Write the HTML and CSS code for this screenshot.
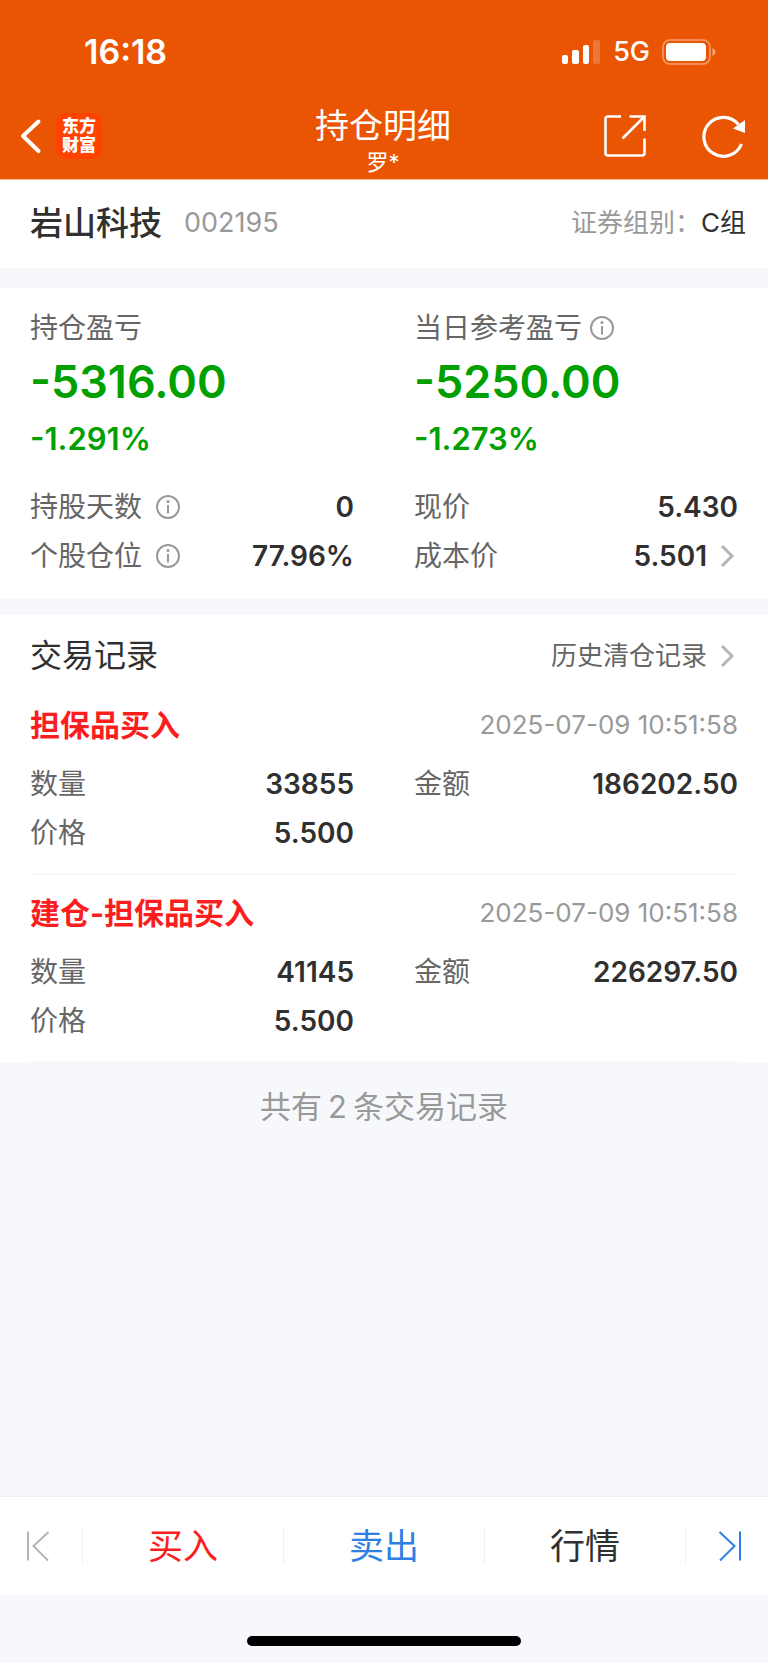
FILE: index.html
```html
<!DOCTYPE html>
<html lang="zh-CN">
<head>
    <meta charset="UTF-8">
    <meta name="viewport" content="width=device-width, initial-scale=1.0">
    <title>持仓明细</title>
    <link rel="stylesheet" href="styles.css">
</head>
<body>
    <header class="header">
        <div class="status-bar">
            <span class="time">16:18</span>
            <div class="status-icons">
                <svg width="40" height="26" viewBox="0 0 40 26" fill="#fff">
                    <rect x="1" y="16" width="6" height="9" rx="2"/>
                    <rect x="11" y="11" width="7" height="14" rx="2"/>
                    <rect x="22" y="6" width="6" height="19" rx="2"/>
                    <rect x="32" y="1" width="7" height="24" rx="2" opacity="0.2"/>
                </svg>
                <span class="network">5G</span>
                <svg width="54" height="26" viewBox="0 0 54 26">
                    <rect x="1" y="1" width="47" height="24" rx="7" fill="none" stroke="#fff" stroke-width="1.5" opacity="0.45"/>
                    <rect x="4" y="4" width="40" height="18" rx="4" fill="#fff"/>
                    <path d="M50.500 9 Q53.500 10.500 53.500 13 Q53.500 15.500 50.500 17 Z" fill="#fff" opacity="0.5"/>
                </svg>
            </div>
        </div>
        <div class="nav">
            <div class="nav-left">
                <button class="icon-btn" aria-label="返回">
                    <svg width="22" height="36" viewBox="0 0 22 36" fill="none" stroke="#fff" stroke-width="4" stroke-linecap="round" stroke-linejoin="round">
                        <path d="M18.500 3.500 L3 18 L18.500 33"/>
                    </svg>
                </button>
                <span class="app-logo">东方<br>财富</span>
            </div>
            <div class="nav-title">
                <h1>持仓明细</h1>
                <p>罗*</p>
            </div>
            <div class="nav-right">
                <button class="icon-btn" aria-label="分享">
                    <svg width="44" height="44" viewBox="0 0 44 44" fill="none" stroke="#fff" stroke-width="2.600">
                        <path d="M18 2.500 H5 Q2.500 2.500 2.500 5 V39 Q2.500 41.500 5 41.500 H39 Q41.500 41.500 41.500 39 V24.500"/>
                        <path d="M26.500 2.500 H41.500 V17"/>
                        <path d="M41 3 L19.500 24.500"/>
                    </svg>
                </button>
                <button class="icon-btn" aria-label="刷新">
                    <svg width="44" height="44" viewBox="0 0 44 44">
                        <path d="M36.500 10.500 A19.500 19.500 0 1 0 39.500 30" fill="none" stroke="#fff" stroke-width="3.200"/>
                        <path d="M43 6 V19 L31 14.500 Z" fill="#fff"/>
                    </svg>
                </button>
            </div>
        </div>
    </header>

    <main>
        <section class="stock">
            <h2>岩山科技</h2>
            <span class="stock-code">002195</span>
            <span class="stock-group">证券组别：<b>C组</b></span>
        </section>

        <section class="card position">
            <div class="columns">
                <div>
                    <div class="label">持仓盈亏</div>
                    <div class="profit">-5316.00</div>
                    <div class="percent">-1.291%</div>
                </div>
                <div>
                    <div class="label">当日参考盈亏
                        <svg class="info near" viewBox="0 0 24 24"><circle cx="12" cy="12" r="11"/><path d="M12 10 V18.500"/><circle class="dot" cx="12" cy="6.500" r="1.500"/></svg>
                    </div>
                    <div class="profit">-5250.00</div>
                    <div class="percent">-1.273%</div>
                </div>
            </div>
            <div class="columns rows">
                <div class="row">
                    <span class="label">持股天数
                        <svg class="info" viewBox="0 0 24 24"><circle cx="12" cy="12" r="11"/><path d="M12 10 V18.500"/><circle class="dot" cx="12" cy="6.500" r="1.500"/></svg>
                    </span>
                    <span class="value">0</span>
                </div>
                <div class="row">
                    <span class="label">现价</span>
                    <span class="value">5.430</span>
                </div>
                <div class="row">
                    <span class="label">个股仓位
                        <svg class="info" viewBox="0 0 24 24"><circle cx="12" cy="12" r="11"/><path d="M12 10 V18.500"/><circle class="dot" cx="12" cy="6.500" r="1.500"/></svg>
                    </span>
                    <span class="value">77.96%</span>
                </div>
                <div class="row">
                    <span class="label">成本价</span>
                    <span class="value">5.501<svg class="chevron" viewBox="0 0 24 24"><path d="M8 2 L18 12 L8 22"/></svg></span>
                </div>
            </div>
        </section>

        <section class="card trades">
            <div class="trades-head">
                <h3>交易记录</h3>
                <a href="#">历史清仓记录<svg class="chevron" viewBox="0 0 24 24"><path d="M8 2 L18 12 L8 22"/></svg></a>
            </div>
            <article class="trade">
                <div class="trade-head">
                    <h4>担保品买入</h4>
                    <time>2025-07-09 10:51:58</time>
                </div>
                <div class="columns rows">
                    <div class="row"><span class="label">数量</span><span class="value">33855</span></div>
                    <div class="row"><span class="label">金额</span><span class="value">186202.50</span></div>
                    <div class="row"><span class="label">价格</span><span class="value">5.500</span></div>
                </div>
            </article>
            <article class="trade">
                <div class="trade-head">
                    <h4>建仓-担保品买入</h4>
                    <time>2025-07-09 10:51:58</time>
                </div>
                <div class="columns rows">
                    <div class="row"><span class="label">数量</span><span class="value">41145</span></div>
                    <div class="row"><span class="label">金额</span><span class="value">226297.50</span></div>
                    <div class="row"><span class="label">价格</span><span class="value">5.500</span></div>
                </div>
            </article>
        </section>

        <p class="total">共有<span class="count">2</span>条交易记录</p>
    </main>

    <footer>
        <div class="toolbar">
            <button class="step" aria-label="上一个">
                <svg width="24" height="32" viewBox="0 0 24 32" fill="none" stroke="#b5b5b5" stroke-width="2">
                    <path d="M2 1.500 V30.500 M22.500 2 L7.500 16 L22 30.500"/>
                </svg>
            </button>
            <button class="action buy">买入</button>
            <button class="action sell">卖出</button>
            <button class="action">行情</button>
            <button class="step" aria-label="下一个">
                <svg width="24" height="32" viewBox="0 0 24 32" fill="none" stroke="#2f80e4" stroke-width="2">
                    <path d="M22 1.500 V30.500 M1.500 2 L16.500 16 L2 30.500"/>
                </svg>
            </button>
        </div>
        <div class="home-area">
            <div class="home-indicator"></div>
        </div>
    </footer>
</body>
</html>
```
FILE: styles.css
```css
* {
    box-sizing: border-box;
    margin: 0;
    padding: 0;
}
body {
    display: flex;
    flex-direction: column;
    min-height: 100vh;
    font-family: Inter, "Noto Sans CJK SC", sans-serif;
    line-height: 40px;
    background-color: #f6f8fb;
    color: #303030;
}
main {
    flex: 1;
}
button {
    background: none;
    border: none;
    font-family: inherit;
    color: inherit;
    cursor: pointer;
}
svg {
    display: block;
    flex-shrink: 0;
}

/* header */
.header {
    background-color: #ea5504;
    color: white;
    border-bottom: 1px solid #f7b78f;
}
.status-bar {
    display: flex;
    justify-content: space-between;
    align-items: center;
    height: 92px;
    padding: 11px 52px 0 84px;
}
.time {
    font-size: 34px;
    font-weight: 600;
}
.status-icons {
    display: flex;
    align-items: center;
    gap: 12px;
}
.network {
    font-size: 27px;
    font-weight: 500;
}
.nav {
    display: grid;
    grid-template-columns: 1fr auto 1fr;
    align-items: center;
    height: 87px;
    padding: 0 22px 0 20px;
}
.nav-left {
    display: flex;
    align-items: center;
    gap: 14px;
}
.nav-right {
    display: flex;
    justify-content: flex-end;
    gap: 55px;
}
.app-logo {
    width: 46px;
    padding: 4px 0;
    border-radius: 10px;
    background-color: #ff4200;
    font-size: 17px;
    font-weight: 900;
    line-height: 19px;
    text-align: center;
}
.nav-title {
    padding-top: 10px;
    text-align: center;
}
.nav-title h1 {
    font-size: 34px;
    font-weight: 400;
    line-height: 42px;
}
.nav-title p {
    font-size: 22px;
    line-height: 30px;
}

/* stock name */
.stock {
    display: flex;
    align-items: center;
    height: 88px;
    padding: 0 22px 2px 30px;
    background: white;
}
.stock h2 {
    font-size: 33px;
    font-weight: 500;
}
.stock-code {
    margin-left: 22px;
    font-size: 27px;
    color: #999;
}
.stock-group {
    margin-left: auto;
    font-size: 26px;
    color: #999;
}
.stock-group b {
    font-weight: 400;
    color: #303030;
}

/* cards */
.card {
    background: white;
    padding: 0 30px;
}
.columns {
    display: grid;
    grid-template-columns: 1fr 1fr;
    column-gap: 60px;
}
.rows {
    row-gap: 9px;
}
.row {
    display: flex;
    justify-content: space-between;
    align-items: center;
}
.label {
    display: flex;
    align-items: center;
    font-size: 28px;
    color: #666;
}
.value {
    display: flex;
    align-items: center;
    font-size: 28px;
    font-weight: 600;
}
.info {
    width: 24px;
    height: 24px;
    margin-left: 14px;
    fill: none;
    stroke: #999;
    stroke-width: 2;
}
.info.near {
    margin-left: 8px;
}
.info .dot {
    fill: #999;
    stroke: none;
}
.chevron {
    width: 24px;
    height: 24px;
    margin-left: 7px;
    fill: none;
    stroke: #b5b5b5;
    stroke-width: 3;
}
.position {
    margin-top: 20px;
    padding-top: 20px;
    padding-bottom: 23px;
}
.profit {
    margin-top: 4px;
    font-size: 45px;
    font-weight: 600;
    line-height: 60px;
    color: #00a000;
}
.percent {
    margin: 6px 0 27px;
    font-size: 31px;
    font-weight: 600;
    line-height: 42px;
    color: #00a000;
}

/* trades */
.trades {
    margin-top: 16px;
}
.trades-head {
    display: flex;
    justify-content: space-between;
    align-items: center;
    height: 82px;
}
.trades-head h3 {
    font-size: 32px;
    font-weight: 400;
}
.trades-head a {
    display: flex;
    align-items: center;
    font-size: 26px;
    color: #666;
    text-decoration: none;
}
.trade {
    padding-bottom: 20px;
    border-bottom: 2px solid #f7f7f7;
}
.trade + .trade {
    padding-top: 10px;
}
.trade-head {
    display: flex;
    justify-content: space-between;
    align-items: center;
    height: 56px;
    margin-bottom: 11px;
}
.trade-head h4 {
    font-size: 30px;
    font-weight: 700;
    color: #fa1e1e;
}
.trade-head time {
    font-size: 26px;
    color: #999;
}
.total {
    padding-top: 20px;
    font-size: 31px;
    line-height: 48px;
    text-align: center;
    color: #999;
}
.count {
    margin: 0 6px;
}

/* bottom toolbar */
.toolbar {
    display: flex;
    align-items: center;
    height: 99px;
    background: white;
    border-top: 1px solid #eee;
}
.step {
    display: flex;
    justify-content: center;
    width: 82px;
    padding-right: 6px;
}
.step:last-child {
    padding: 0 0 0 6px;
}
.action {
    flex: 1;
    height: 34px;
    border-left: 1px solid #eee;
    font-size: 35px;
    line-height: 34px;
}
.action:nth-child(4) {
    border-right: 1px solid #eee;
}
.buy {
    color: #fa1e1e;
}
.sell {
    color: #2f80e4;
}
.home-area {
    display: flex;
    justify-content: center;
    height: 68px;
    padding-top: 41px;
}
.home-indicator {
    width: 274px;
    height: 10px;
    border-radius: 5px;
    background: black;
}
```
